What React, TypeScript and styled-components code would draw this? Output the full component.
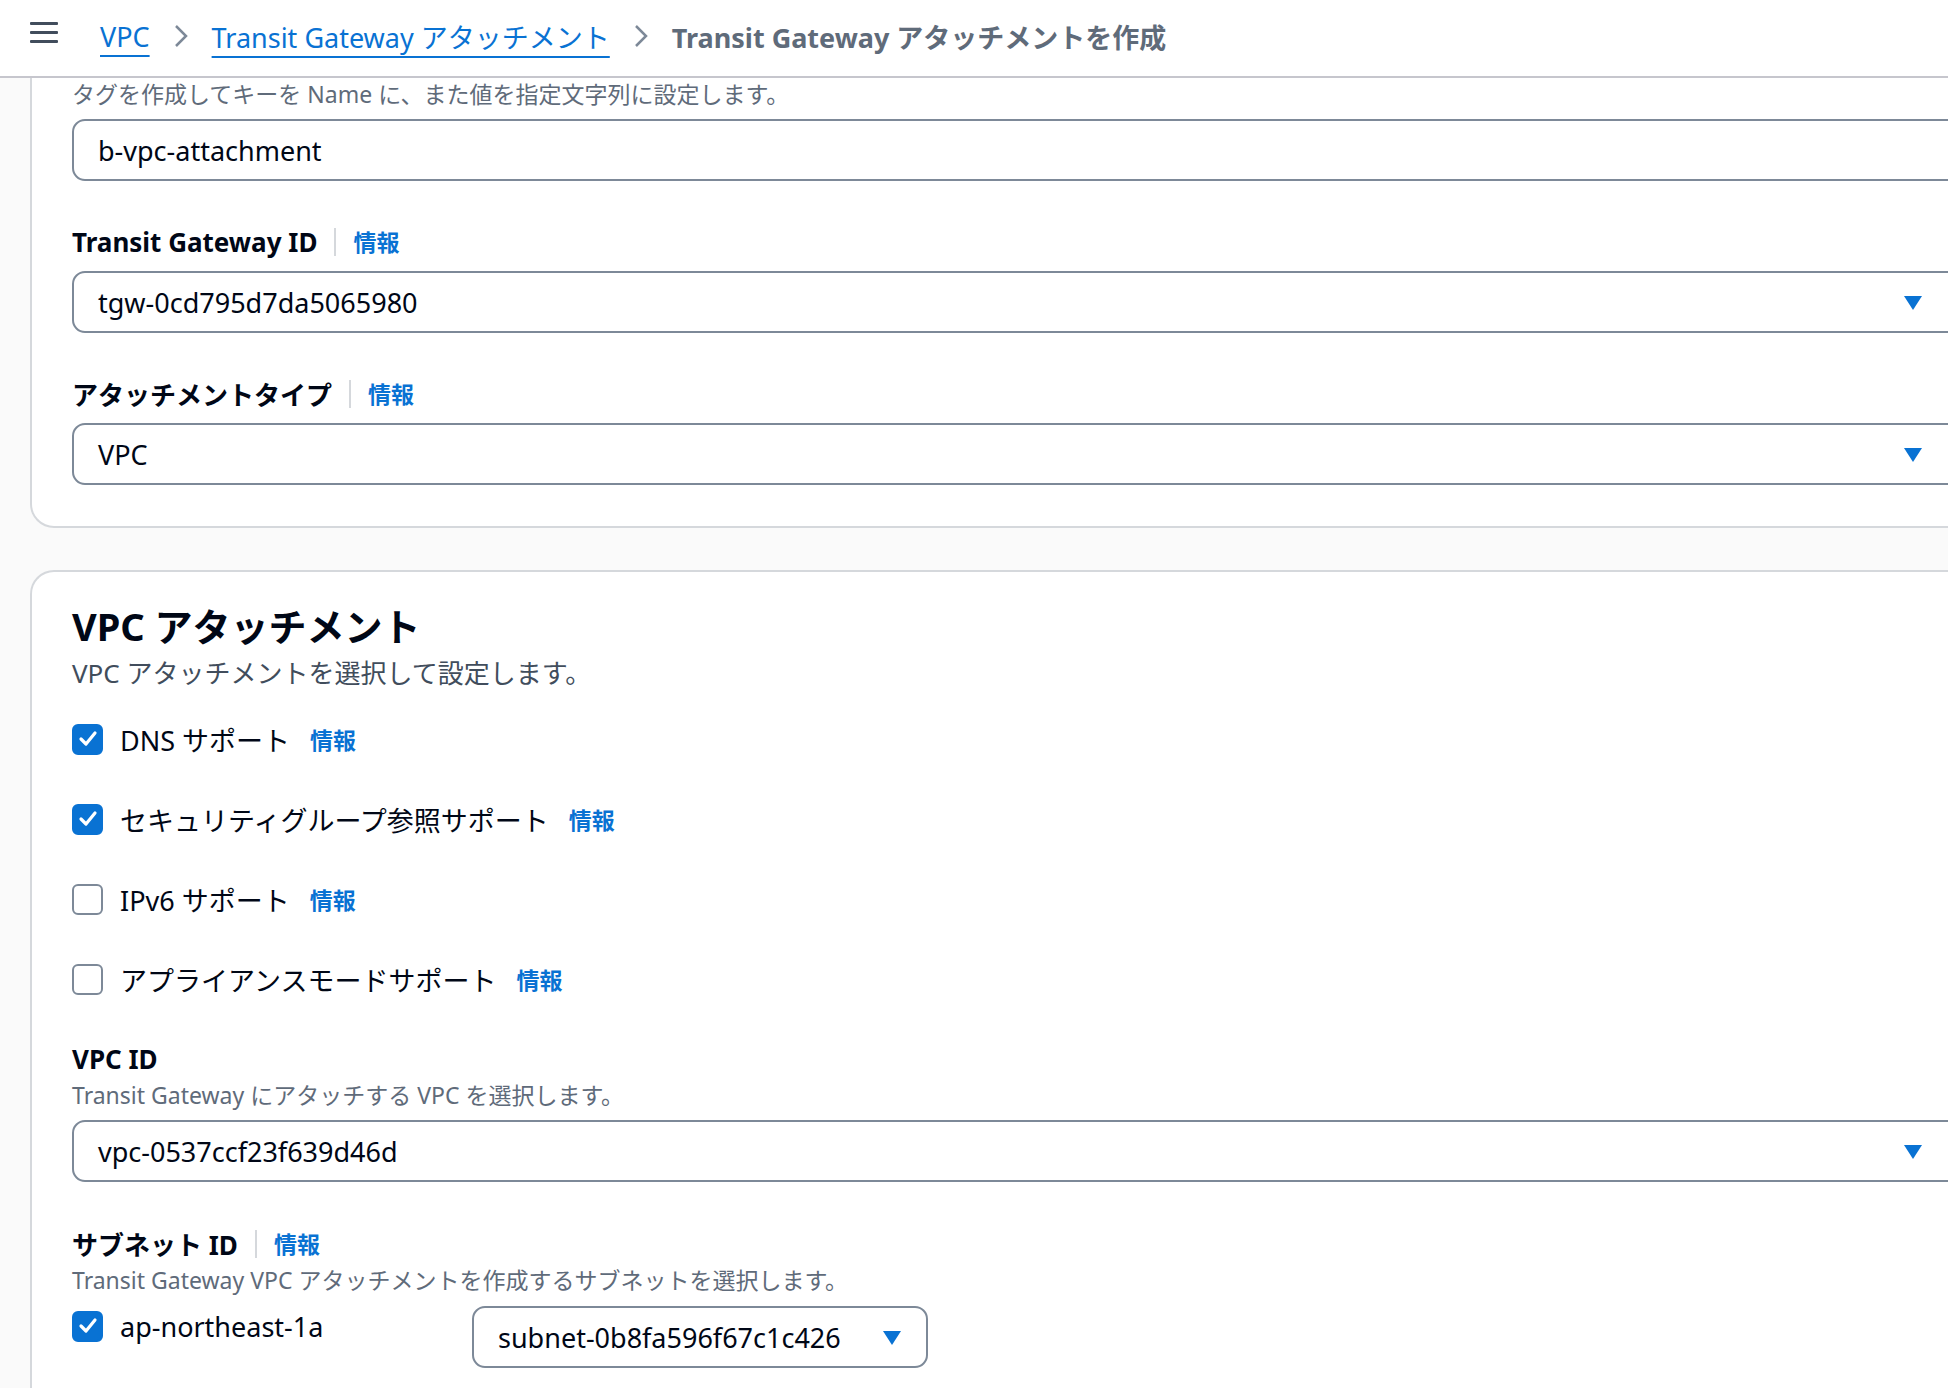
import React from "react";
import styled, { createGlobalStyle } from "styled-components";

const Global = createGlobalStyle`
  html, body { margin: 0; padding: 0; background: #fafafa; overflow: hidden; }
  body { font-family: "Noto Sans", "Noto Sans CJK JP", sans-serif; color: #000716; }
`;

const Page = styled.div`width: 1948px; height: 1388px; overflow: hidden; display: flex; flex-direction: column;`;
const Header = styled.header`
  height: 78px; box-sizing: border-box; background: #fff; border-bottom: 2px solid #c6c6cd;
  display: flex; align-items: center; padding-left: 30px; gap: 0; flex-shrink: 0;
`;
const Burger = styled.div`width: 28px; display: flex; flex-direction: column; gap: 6px; margin-right: 42px; margin-top: -12px;
  span { display: block; height: 3px; background: #414d5c; border-radius: 1px; }`;
const Crumb = styled.a<{ $current?: boolean }>`
  font-size: 27px; font-weight: ${p => (p.$current ? 700 : 400)};
  color: ${p => (p.$current ? "#5f6b7a" : "#0972d3")};
  text-decoration: ${p => (p.$current ? "none" : "underline")};
  text-underline-offset: 8px; text-decoration-thickness: 2px; margin-top: -4px;
`;
const Chev = styled.svg`margin: 0 24px; margin-top: -4px;`;
const Main = styled.main`flex: 1; padding-left: 30px; display: flex; flex-direction: column; gap: 42px;`;
const Card = styled.section<{ $top?: boolean }>`
  width: 1960px; background: #fff; box-sizing: border-box;
  border: 2px solid #d5d8dc; border-right: none;
  ${p => (p.$top ? "border-top: none; border-radius: 0 0 0 24px; padding: 0 0 41px 40px;" : "border-radius: 24px 0 0 0; padding: 32px 0 40px 40px; min-height: 900px;")}
  display: flex; flex-direction: column;
`;
const Desc = styled.div`font-size: 23px; color: #5f6b7a; line-height: 32px;`;
const Lead = styled.div`font-size: 26px; color: #414d5c; line-height: 32px; margin-top: 9px;`;
const Field = styled.div<{ $mt?: number }>`display: flex; flex-direction: column; margin-top: ${p => p.$mt ?? 0}px;`;
const LabelRow = styled.div<{ $mb?: number }>`display: flex; align-items: center; height: 36px; margin-bottom: ${p => p.$mb ?? 11}px;`;
const Label = styled.span`font-size: 26px; font-weight: 700;`;
const Info = styled.a`font-size: 23px; font-weight: 700; color: #0972d3; border-left: 2px solid #d5d8dc; padding-left: 17px; margin-left: 17px; line-height: 28px;`;
const InfoInline = styled.a`font-size: 23px; font-weight: 700; color: #0972d3; margin-left: 20px;`;
const Input = styled.div<{ $w?: string; $mt?: number }>`
  width: ${p => p.$w ?? "1900px"}; height: 62px; box-sizing: border-box;
  border: 2px solid #7d8998; border-radius: 13px; margin-top: ${p => p.$mt ?? 0}px;
  display: flex; align-items: center; padding: 0 24px; font-size: 27px; position: relative;
`;
const Arrow = styled.svg<{ $r: number }>`position: absolute; right: ${p => p.$r}px; top: 22px;`;
const H2 = styled.h2`margin: 0; font-size: 38px; font-weight: 700; line-height: 44px;`;
const Checks = styled.div`display: flex; flex-direction: column; gap: 44px; margin-top: 32px;`;
const CheckRow = styled.div`display: flex; align-items: center; height: 36px; font-size: 27px;`;
const Box = styled.span<{ $on?: boolean }>`
  width: 31px; height: 31px; box-sizing: border-box; border-radius: 6px; margin-right: 17px; flex-shrink: 0;
  background: ${p => (p.$on ? "#0972d3" : "#fff")}; border: 2px solid ${p => (p.$on ? "#0972d3" : "#7d8998")};
  display: flex; align-items: center; justify-content: center;
`;
const SubRow = styled.div`display: flex; align-items: flex-start; margin-top: 10px;`;
const AZ = styled.div`display: flex; align-items: center; height: 36px; font-size: 27px; width: 400px; margin-top: 2px;`;

const Tri = ({ r }: { r: number }) => (
  <Arrow $r={r} width="20" height="16" viewBox="0 0 20 16"><path d="M1 1h18L10 15z" fill="#0972d3" /></Arrow>
);
const Check = ({ on }: { on?: boolean }) => (
  <Box $on={on}>{on && <svg width="20" height="18" viewBox="0 0 20 18"><path d="M3 9l5 5 9-11" stroke="#fff" strokeWidth="3.2" fill="none" strokeLinecap="round" strokeLinejoin="round" /></svg>}</Box>
);
const ChevIcon = () => (
  <Chev width="14" height="24" viewBox="0 0 14 24"><path d="M2 2l10 10-10 10" stroke="#7d8998" strokeWidth="2.5" fill="none" /></Chev>
);

export default function App() {
  return (
    <Page>
      <Global />
      <Header>
        <Burger><span /><span /><span /></Burger>
        <Crumb>VPC</Crumb><ChevIcon />
        <Crumb>Transit Gateway アタッチメント</Crumb><ChevIcon />
        <Crumb $current>Transit Gateway アタッチメントを作成</Crumb>
      </Header>
      <Main>
        <Card $top>
          <Desc>タグを作成してキーを Name に、また値を指定文字列に設定します。</Desc>
          <Input $mt={9}>b-vpc-attachment</Input>
          <Field $mt={43}>
            <LabelRow><Label>Transit Gateway ID</Label><Info>情報</Info></LabelRow>
            <Input>tgw-0cd795d7da5065980<Tri r={47} /></Input>
          </Field>
          <Field $mt={43}>
            <LabelRow><Label>アタッチメントタイプ</Label><Info>情報</Info></LabelRow>
            <Input>VPC<Tri r={47} /></Input>
          </Field>
        </Card>
        <Card>
          <H2>VPC アタッチメント</H2>
          <Lead>VPC アタッチメントを選択して設定します。</Lead>
          <Checks>
            <CheckRow><Check on />DNS サポート<InfoInline>情報</InfoInline></CheckRow>
            <CheckRow><Check on />セキュリティグループ参照サポート<InfoInline>情報</InfoInline></CheckRow>
            <CheckRow><Check />IPv6 サポート<InfoInline>情報</InfoInline></CheckRow>
            <CheckRow><Check />アプライアンスモードサポート<InfoInline>情報</InfoInline></CheckRow>
          </Checks>
          <Field $mt={44}>
            <LabelRow $mb={2}><Label>VPC ID</Label></LabelRow>
            <Desc>Transit Gateway にアタッチする VPC を選択します。</Desc>
            <Input $mt={9}>vpc-0537ccf23f639d46d<Tri r={47} /></Input>
          </Field>
          <Field $mt={44}>
            <LabelRow $mb={2}><Label>サブネット ID</Label><Info>情報</Info></LabelRow>
            <Desc>Transit Gateway VPC アタッチメントを作成するサブネットを選択します。</Desc>
            <SubRow>
              <AZ><Check on />ap-northeast-1a</AZ>
              <Input $w="456px">subnet-0b8fa596f67c1c426<Tri r={24} /></Input>
            </SubRow>
          </Field>
        </Card>
      </Main>
    </Page>
  );
}
